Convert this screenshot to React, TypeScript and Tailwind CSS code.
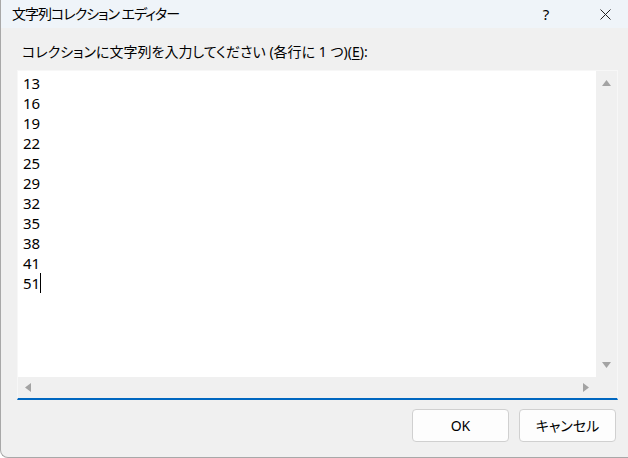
import React from 'react';

const values = ['13', '16', '19', '22', '25', '29', '32', '35', '38', '41', '51'];

function Arrow({ dir }: { dir: 'up' | 'down' | 'left' | 'right' }) {
  const pts = {
    up: '0,6 4.5,0 9,6',
    down: '0,0 4.5,6 9,0',
    left: '6,0 0,4.5 6,9',
    right: '0,0 6,4.5 0,9',
  }[dir];
  const vertical = dir === 'up' || dir === 'down';
  return (
    <svg width={vertical ? 9 : 6} height={vertical ? 6 : 9} viewBox={vertical ? '0 0 9 6' : '0 0 6 9'}>
      <polygon points={pts} fill="#a3a3a3" />
    </svg>
  );
}

export default function App() {
  const font = "font-['Noto_Sans','Noto_Sans_CJK_JP',sans-serif] [font-feature-settings:'palt']";
  return (
    <div className={`w-[628px] h-[458px] bg-[#f0f0f0] flex flex-col text-black border-l border-b border-[#a8a8a8] rounded-bl-[8px] overflow-hidden ${font}`}>
      <div className="h-[28px] bg-[#eff4f9] flex items-center shrink-0">
        <span className="pl-[11px] text-[14px] leading-[20px] tracking-[-1px]">文字列コレクション エディター</span>
        <div className="ml-auto flex items-center gap-[26px]">
          <span className="w-[20px] text-center text-[15px] leading-[20px]">?</span>
          <div className="w-[46px] h-[28px] flex items-center justify-center">
            <svg width="11" height="11" viewBox="0 0 11 11">
              <path d="M0.5 0.5 L10.5 10.5 M10.5 0.5 L0.5 10.5" stroke="#222" strokeWidth="1" />
            </svg>
          </div>
        </div>
      </div>

      <div className="pt-[14px] pl-[21px] h-[34px] text-[14px] leading-[20px] shrink-0">
        コレクションに文字列を入力してください (各行に 1 つ)(<span className="underline underline-offset-2">E</span>):
      </div>

      <div className="mt-[8px] ml-[16px] w-[601px] h-[330px] border border-[#f7f7f7] border-b-2 border-b-[#0067c0] flex flex-col shrink-0">
        <div className="flex h-[306px]">
          <div className="w-[578px] h-full bg-white pt-[2px] pl-[5px] text-[15px] leading-[20px]">
            {values.map((v, i) => (
              <div key={v} className="flex items-center">
                <span>{v}</span>
                {i === values.length - 1 && <span className="w-px h-[20px] bg-black" />}
              </div>
            ))}
          </div>
          <div className="w-[21px] h-full flex flex-col justify-between">
            <div className="h-[23px] flex items-center justify-center"><Arrow dir="up" /></div>
            <div className="h-[24px] flex items-center justify-center"><Arrow dir="down" /></div>
          </div>
        </div>
        <div className="flex h-[21px]">
          <div className="w-[578px] flex items-center justify-between px-[7px]">
            <Arrow dir="left" />
            <Arrow dir="right" />
          </div>
          <div className="w-[21px]" />
        </div>
      </div>

      <div className="mt-[9px] flex justify-end gap-[10px] pr-[12px]">
        <button className="w-[97px] h-[33px] bg-[#fdfdfd] border border-[#d0d0d0] rounded-[4px] text-[14px]">OK</button>
        <button className="w-[97px] h-[33px] bg-[#fdfdfd] border border-[#d0d0d0] rounded-[4px] text-[14px]">キャンセル</button>
      </div>
    </div>
  );
}
